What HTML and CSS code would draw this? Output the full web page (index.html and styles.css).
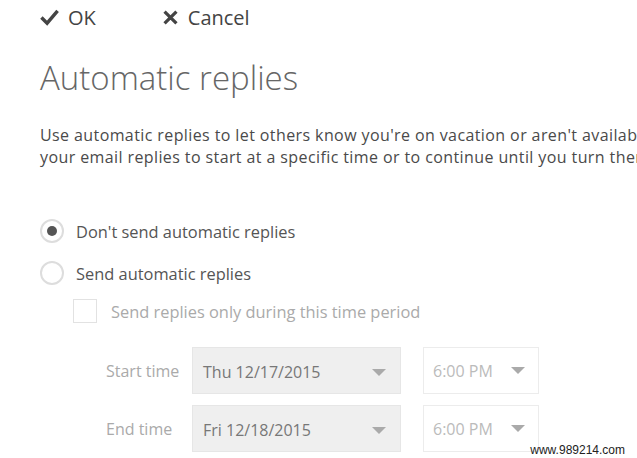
FILE: index.html
```html
<!DOCTYPE html>
<html lang="en">
<head>
    <meta charset="UTF-8">
    <meta name="viewport" content="width=device-width, initial-scale=1.0">
    <title>Automatic replies</title>
    <link rel="stylesheet" href="styles.css">
</head>
<body>
    <div class="panel">
        <div class="toolbar">
            <button class="tool-btn">
                <svg class="tool-icon" viewBox="0 0 20 20" width="19" height="19">
                    <path d="M1.5 10 L7.5 16 L18.5 3" fill="none" stroke="#444" stroke-width="3.6"/>
                </svg>
                OK
            </button>
            <button class="tool-btn">
                <svg class="tool-icon" viewBox="0 0 20 20" width="17" height="17">
                    <path d="M3 3 L17 17 M17 3 L3 17" fill="none" stroke="#444" stroke-width="3.8"/>
                </svg>
                Cancel
            </button>
        </div>

        <h1 class="title">Automatic replies</h1>

        <p class="intro">
            <span class="intro-line">Use automatic replies to let others know you're on vacation or aren't available to respond to email. You can set</span>
            <span class="intro-line">your email replies to start at a specific time or to continue until you turn them off.</span>
        </p>

        <div class="options">
            <label class="radio-row">
                <span class="radio checked"></span>
                Don't send automatic replies
            </label>
            <label class="radio-row">
                <span class="radio"></span>
                Send automatic replies
            </label>
            <label class="check-row">
                <span class="checkbox"></span>
                Send replies only during this time period
            </label>
        </div>

        <div class="times">
            <div class="time-row">
                <span class="time-label">Start time</span>
                <div class="date-select">
                    <span>Thu 12/17/2015</span>
                    <span class="caret"></span>
                </div>
                <div class="hour-select">
                    <span>6:00 PM</span>
                    <span class="caret"></span>
                </div>
            </div>
            <div class="time-row">
                <span class="time-label">End time</span>
                <div class="date-select">
                    <span>Fri 12/18/2015</span>
                    <span class="caret"></span>
                </div>
                <div class="hour-select">
                    <span>6:00 PM</span>
                    <span class="caret"></span>
                </div>
            </div>
        </div>
    </div>
    <div class="watermark">www.989214.com</div>
</body>
</html>
```

FILE: styles.css
```css
html, body {
    margin: 0;
    padding: 0;
    height: 100%;
    overflow: hidden;
}

body {
    font-family: "Open Sans", "Noto Sans", sans-serif;
    background-color: #fff;
    color: #444;
}

.panel {
    padding-left: 40px;
}

.toolbar {
    display: flex;
    gap: 66px;
    height: 34px;
    align-items: center;
}

.tool-btn {
    display: flex;
    align-items: center;
    gap: 9px;
    padding: 0;
    border: none;
    background: none;
    font-family: inherit;
    font-size: 20px;
    color: #444;
}

.title {
    margin: 21px 0 0;
    font-size: 33px;
    font-weight: 300;
    color: #666;
    line-height: 46px;
}

.intro {
    margin: 23px 0 0;
    font-size: 16px;
    letter-spacing: 0.4px;
    line-height: 22px;
    color: #4a4a4a;
}

.intro-line {
    display: block;
    white-space: nowrap;
}

.options {
    margin-top: 42px;
    display: flex;
    flex-direction: column;
}

.radio-row, .check-row {
    display: flex;
    align-items: center;
    font-size: 16.4px;
    color: #555;
}

.radio-row {
    gap: 12px;
    height: 42px;
}

.radio {
    width: 20px;
    height: 20px;
    border: 2px solid #ddd;
    border-radius: 50%;
    display: flex;
    align-items: center;
    justify-content: center;
}

.radio.checked::after {
    content: "";
    width: 10px;
    height: 10px;
    border-radius: 50%;
    background-color: #555;
}

.check-row {
    margin: -3px 0 0 33px;
    gap: 14px;
    height: 40px;
    color: #aaa;
}

.checkbox {
    width: 22px;
    height: 22px;
    border: 1px solid #e2e2e2;
}

.times {
    margin: 16px 0 0 66px;
    display: flex;
    flex-direction: column;
    gap: 11px;
}

.time-row {
    display: flex;
    align-items: center;
}

.time-label {
    width: 86px;
    font-size: 16px;
    color: #aaa;
}

.date-select, .hour-select {
    display: flex;
    align-items: center;
    justify-content: space-between;
    box-sizing: border-box;
    height: 47px;
    font-size: 16px;
}

.date-select {
    width: 209px;
    padding: 3px 14px 0 10px;
    background-color: #efefef;
    border: 1px solid #e6e6e6;
    color: #777;
}

.hour-select {
    width: 116px;
    margin-left: 22px;
    padding: 0 13px 0 9px;
    border: 1px solid #ececec;
    color: #bbb;
}

.caret {
    width: 0;
    height: 0;
    border-left: 7px solid transparent;
    border-right: 7px solid transparent;
    border-top: 7px solid #aaa;
}

.watermark {
    position: absolute;
    right: 12px;
    bottom: 1px;
    font-family: "Liberation Sans", Arial, sans-serif;
    font-size: 12px;
    color: #222;
}
```
